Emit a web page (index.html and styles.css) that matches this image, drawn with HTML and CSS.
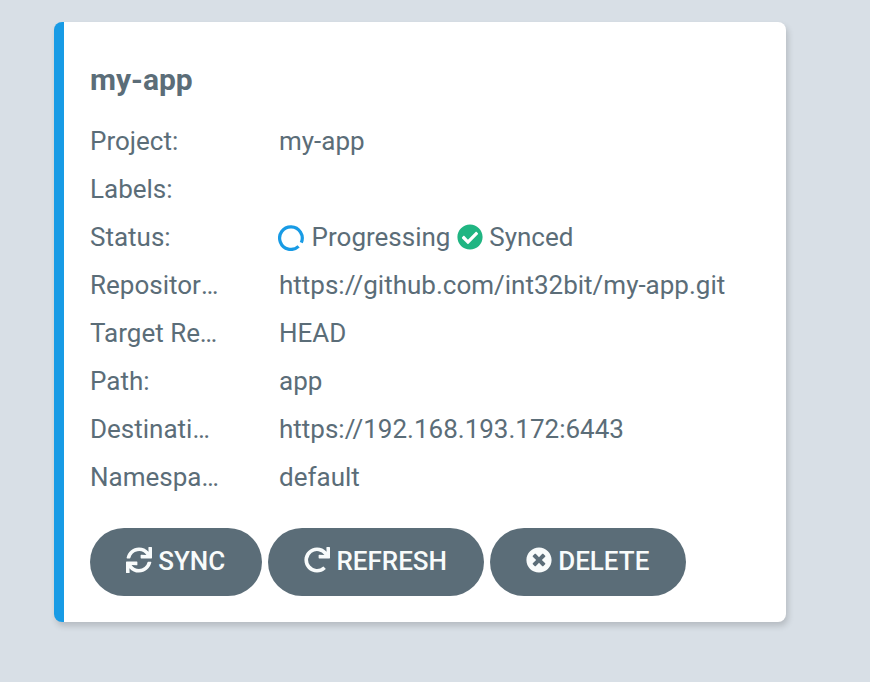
FILE: index.html
```html
<!DOCTYPE html>
<html lang="en">
<head>
<meta charset="utf-8">
<title>Applications</title>
<link rel="stylesheet" href="styles.css">
</head>
<body>
<main class="tile">
  <h1 class="title">my-app</h1>
  <dl class="details">
    <dt>Project:</dt><dd>my-app</dd>
    <dt>Labels:</dt><dd></dd>
    <dt>Status:</dt>
    <dd class="status">
      <svg class="spinner" viewBox="0 0 26 26"><path d="M20.6 21.4A11.3 11.3 0 1 1 23.3 17.6"/></svg>
      <span class="health">Progressing</span>
      <svg class="check" viewBox="0 0 512 512"><path d="M504 256c0 136.967-111.033 248-248 248S8 392.967 8 256 119.033 8 256 8s248 111.033 248 248zM227.314 387.314l184-184c6.248-6.248 6.248-16.379 0-22.627l-22.627-22.627c-6.248-6.249-16.379-6.249-22.628 0L216 308.118l-70.059-70.059c-6.248-6.248-16.379-6.248-22.628 0l-22.627 22.627c-6.248 6.248-6.248 16.379 0 22.627l104 104c6.249 6.249 16.379 6.249 22.628.001z"/></svg>
      <span>Synced</span>
    </dd>
    <dt class="repository">Repository:</dt><dd>https://github.com/int32bit/my-app.git</dd>
    <dt>Target Revision:</dt><dd>HEAD</dd>
    <dt>Path:</dt><dd>app</dd>
    <dt>Destination:</dt><dd>https://192.168.193.172:6443</dd>
    <dt>Namespace:</dt><dd>default</dd>
  </dl>
  <div class="actions">
    <button class="button sync"><svg viewBox="0 0 512 512"><path d="M440.65 12.57l4 82.77A247.16 247.16 0 0 0 255.83 8C134.73 8 33.91 94.92 12.29 209.82A12 12 0 0 0 24.09 224h49.05a12 12 0 0 0 11.67-9.26 175.91 175.91 0 0 1 317-56.94l-101.46-4.86a12 12 0 0 0-12.57 12v47.41a12 12 0 0 0 12 12H500a12 12 0 0 0 12-12V12a12 12 0 0 0-12-12h-47.37a12 12 0 0 0-11.98 12.57zM255.83 432a175.61 175.61 0 0 1-146-77.8l101.8 4.87a12 12 0 0 0 12.57-12v-47.4a12 12 0 0 0-12-12H12a12 12 0 0 0-12 12V500a12 12 0 0 0 12 12h47.35a12 12 0 0 0 12-12.6l-4.15-82.57A247.17 247.17 0 0 0 255.83 504c121.11 0 221.93-86.92 243.55-201.82a12 12 0 0 0-11.8-14.18h-49.05a12 12 0 0 0-11.67 9.26A175.86 175.86 0 0 1 255.83 432z"/></svg><span>SYNC</span></button>
    <button class="button refresh"><svg viewBox="0 0 512 512"><path d="M500.33 0h-47.41a12 12 0 0 0-12 12.57l4 82.76A247.42 247.42 0 0 0 256 8C119.34 8 7.9 119.53 8 256.19 8.1 393.07 119.1 504 256 504a247.1 247.1 0 0 0 166.18-63.91 12 12 0 0 0 .48-17.43l-34-34a12 12 0 0 0-16.38-.55A176 176 0 1 1 402.1 157.8l-101.53-4.87a12 12 0 0 0-12.57 12v47.41a12 12 0 0 0 12 12h200.33a12 12 0 0 0 12-12V12a12 12 0 0 0-12-12z"/></svg><span>REFRESH</span></button>
    <button class="button delete"><svg viewBox="0 0 512 512"><path d="M256 8C119 8 8 119 8 256s111 248 248 248 248-111 248-248S393 8 256 8zm121.6 313.1c4.7 4.7 4.7 12.3 0 17L338 377.6c-4.7 4.7-12.3 4.7-17 0L256 312l-65.1 65.6c-4.7 4.7-12.3 4.7-17 0L134.4 338c-4.7-4.7-4.7-12.3 0-17l65.6-65-65.6-65.1c-4.7-4.7-4.7-12.3 0-17l39.6-39.6c4.7-4.7 12.3-4.7 17 0l65 65.7 65.1-65.6c4.7-4.7 12.3-4.7 17 0l39.6 39.6c4.7 4.7 4.7 12.3 0 17L312 256l65.6 65.1z"/></svg><span>DELETE</span></button>
  </div>
</main>
</body>
</html>
```
FILE: styles.css
```css
* { box-sizing: border-box; }
body { margin: 0; height: 682px; overflow: hidden; background: #d8dfe6; color: #5b6d78; font-family: Roboto, sans-serif; font-size: 26px; }
.tile { width: 732px; height: 600px; margin: 22px 0 0 54px; padding: 34px 26px 26px; border-left: 10px solid #189be5; border-radius: 8px; background: #fff; box-shadow: 2px 4px 6px rgba(0,0,0,.16); }
.title { margin: 0 0 13px; font-size: 30px; line-height: 48px; font-weight: 700; }
.details { margin: 0; display: grid; grid-template-columns: 130px 1fr; column-gap: 59px; grid-auto-rows: 48px; line-height: 48px; }
.details dt, .details dd { margin: 0; white-space: nowrap; overflow: hidden; text-overflow: ellipsis; }
.details .repository { width: 128.8px; }
.details .status { display: flex; align-items: center; margin-left: -1px; }
.status svg { width: 26px; height: 26px; flex: none; }
.status .spinner { margin: 2px 7.6px 0 0; fill: none; stroke: #189be5; stroke-width: 3.2; }
.status .check { margin: 0 6px 1px 6.8px; fill: #20b582; }
.actions { display: flex; gap: 6px; margin-top: 27px; }
.button { display: flex; align-items: center; justify-content: center; gap: 6.5px; height: 68px; border: 0; border-radius: 34px; background: #5b6d78; color: #f8fbfb; font: 500 26px Roboto, sans-serif; padding: 0 1px 2px 0; }
.button svg { width: 26px; height: 26px; fill: currentColor; flex: none; margin-bottom: 2px; }
.sync { width: 172px; }
.refresh { width: 216px; }
.delete { width: 196px; }
```
